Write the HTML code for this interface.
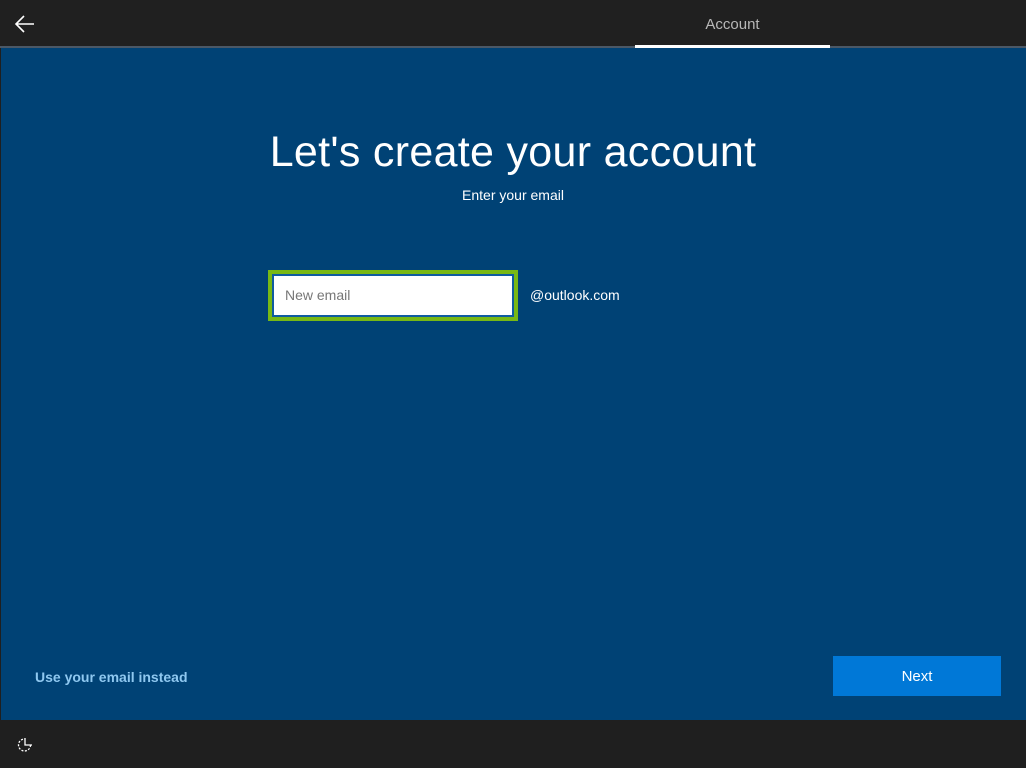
<!DOCTYPE html>
<html><head><style>
body{margin:0;width:1026px;height:768px;overflow:hidden;background:#1f1f1f;font-family:"Liberation Sans",sans-serif;position:relative}
.top{position:absolute;left:0;top:0;width:1026px;height:46px;background:#202020}
.line{position:absolute;left:0;top:46px;width:1026px;height:2px;background:#4b5866}
.ul{position:absolute;left:635px;top:45px;width:195px;height:3px;background:#fff}
.acc{position:absolute;left:635px;width:195px;top:16px;text-align:center;color:#b8b8b8;font-size:15px}
.main{position:absolute;left:1px;top:48px;width:1025px;height:672px;background:#004275}
h1{position:absolute;top:128px;left:0;width:1026px;margin:0;text-align:center;color:#fff;font-weight:normal;font-size:43px;letter-spacing:0.3px}
.sub{position:absolute;top:187px;left:0;width:1026px;text-align:center;color:#fff;font-size:14px}
.box{position:absolute;left:268px;top:270px;width:242px;height:43px;border:4px solid #78b814;background:#0f5ba0}
.in{position:absolute;left:2px;top:2px;right:2px;bottom:2px;background:#fff;color:#777;font-size:14px;line-height:39px;padding-left:11px}
.dom{position:absolute;left:530px;top:287px;color:#fff;font-size:14px}
.link{position:absolute;left:35px;top:669px;color:#8fc8f0;font-size:14px;font-weight:bold}
.next{position:absolute;left:833px;top:656px;width:168px;height:40px;background:#0078d7;color:#fff;text-align:center;line-height:42px;font-size:15px}
</style></head><body>
<div class="top"></div><div class="line"></div><div class="ul"></div>
<svg style="position:absolute;left:14px;top:15px" width="22" height="18" viewBox="0 0 22 18"><path d="M20 9H3M10 1L2 9l8 8" stroke="#fff" stroke-width="1.6" fill="none"/></svg>
<div class="acc">Account</div>
<div class="main"></div>
<h1>Let's create your account</h1>
<div class="sub">Enter your email</div>
<div class="box"><div class="in">New email</div></div>
<div class="dom">@outlook.com</div>
<div class="link">Use your email instead</div>
<div class="next">Next</div>
<svg style="position:absolute;left:16px;top:736px" width="20" height="18" viewBox="0 0 20 18"><path d="M14.5 9a6 6 0 1 1-6-6" stroke="#fff" stroke-width="1.3" fill="none" stroke-dasharray="2 1.5"/><path d="M9 2v7h7" stroke="#fff" stroke-width="1.3" fill="none"/></svg>
</body></html>
